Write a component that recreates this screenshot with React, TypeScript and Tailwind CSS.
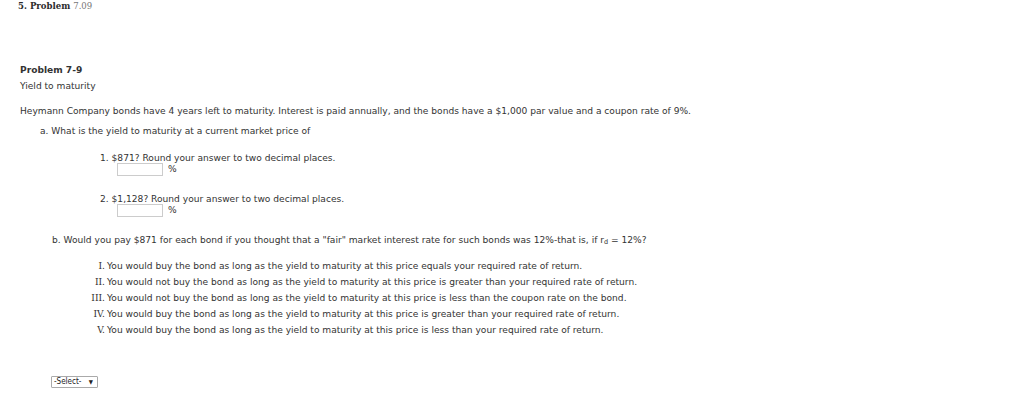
import React from "react";

const sans = { fontFamily: '"DejaVu Sans", Verdana, sans-serif' };
const serif = { fontFamily: '"DejaVu Serif", serif' };

export default function App() {
  const items: [string, string][] = [
    ["I.", "You would buy the bond as long as the yield to maturity at this price equals your required rate of return."],
    ["II.", "You would not buy the bond as long as the yield to maturity at this price is greater than your required rate of return."],
    ["III.", "You would not buy the bond as long as the yield to maturity at this price is less than the coupon rate on the bond."],
    ["IV.", "You would buy the bond as long as the yield to maturity at this price is greater than your required rate of return."],
    ["V.", "You would buy the bond as long as the yield to maturity at this price is less than your required rate of return."],
  ];
  return (
    <div className="w-[1024px] h-[416px] bg-white text-[#333] overflow-hidden" style={sans}>
      <div
        className="pl-[18px] h-[11px] text-[9.5px] leading-[11px] font-bold text-[#2b2b2b]"
        style={{ fontFamily: '"DejaVu Serif Condensed", "DejaVu Serif", serif', fontStretch: "condensed" }}
      >
        5. Problem <span className="font-normal text-[#777]">7.09</span>
      </div>
      <div className="pl-[20px] pt-[51px] text-[9.1px]">
        <div className="font-bold h-[16px] leading-[16px]">Problem 7-9</div>
        <div className="h-[16px] leading-[16px]">Yield to maturity</div>
        <div className="h-[9px]" />
        <div className="h-[16px] leading-[16px]">
          Heymann Company bonds have 4 years left to maturity. Interest is paid annually, and the bonds have a $1,000 par value and a coupon rate of 9%.
        </div>
        <div className="pl-[20px] h-[16px] leading-[16px] mt-[4px]">a. What is the yield to maturity at a current market price of</div>
        <div className="pl-[80px] pt-[14px]">
          <div className="h-[10px] leading-[10px]">1. $871? Round your answer to two decimal places.</div>
          <div className="flex items-center gap-[5px] pl-[17px] h-[13px]">
            <div className="w-[46px] h-[13px] border border-[#ccc] bg-white" />
            <span className="leading-[13px]">%</span>
          </div>
          <div className="h-[18px]" />
          <div className="h-[10px] leading-[10px]">2. $1,128? Round your answer to two decimal places.</div>
          <div className="flex items-center gap-[5px] pl-[17px] h-[13px]">
            <div className="w-[46px] h-[13px] border border-[#ccc] bg-white" />
            <span className="leading-[13px]">%</span>
          </div>
        </div>
        <div className="pl-[32px] mt-[18px] h-[10px] leading-[10px]">
          b. Would you pay $871 for each bond if you thought that a "fair" market interest rate for such bonds was 12%-that is, if r<span className="text-[6.5px] relative top-[1px]">d</span> = 12%?
        </div>
        <div className="mt-[13px]">
          {items.map(([n, t]) => (
            <div key={n} className="flex h-[16px] leading-[16px]">
              <span className="w-[87px] text-right pr-[2px]" style={serif}>{n}</span>
              <span>{t}</span>
            </div>
          ))}
        </div>
        <div className="pl-[31px] mt-[37px]">
          <div className="inline-flex items-center justify-between w-[47px] h-[12px] border border-[#aaa] rounded-[1px] pl-[2px] pr-[4px] text-[8px] text-[#222] bg-white" style={{ fontFamily: '"DejaVu Sans Condensed", "DejaVu Sans", sans-serif' }}>
            <span className="leading-[10px]">-Select-</span>
            <span className="text-[6px] leading-[10px]">▼</span>
          </div>
        </div>
      </div>
    </div>
  );
}
